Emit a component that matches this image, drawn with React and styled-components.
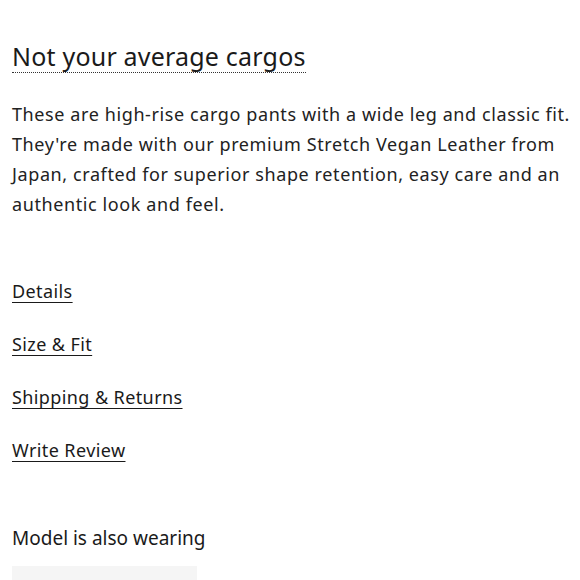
import React from "react"
import styled, { createGlobalStyle } from "styled-components"

const GlobalStyle = createGlobalStyle`
  body {
    margin: 0;
    background: #ffffff;
    font-family: "Noto Sans", "DejaVu Sans", sans-serif;
    color: #1a1a1a;
  }
`

const Page = styled.div`
  padding: 40px 4px 0 12px;
  height: 580px;
  overflow: hidden;
  box-sizing: border-box;
`

const Title = styled.h2`
  margin: 0;
  display: inline-block;
  font-size: 25px;
  font-weight: 400;
  line-height: 32px;
  letter-spacing: 0.2px;
  border-bottom: 1px dotted #333;
  padding-bottom: 0;
`

const Description = styled.p`
  margin: 26px 0 0;
  font-size: 18px;
  line-height: 30px;
  letter-spacing: 0.6px;
  color: #222;
`

const LinkList = styled.ul`
  list-style: none;
  margin: 59px 0 0;
  padding: 0;
  display: flex;
  flex-direction: column;
  gap: 27px;
`

const LinkItem = styled.li`
  a {
    font-size: 18px;
    line-height: 26px;
    letter-spacing: 0.4px;
    color: #1a1a1a;
    text-decoration: underline;
    text-underline-offset: 4px;
    text-decoration-thickness: 1px;
  }
`

const Subheading = styled.h3`
  margin: 61px 0 0;
  font-size: 19px;
  font-weight: 400;
  line-height: 28px;
`

const Placeholder = styled.div`
  margin-top: 14px;
  width: 185px;
  height: 40px;
  background: #f5f5f5;
`

const links = ["Details", "Size & Fit", "Shipping & Returns", "Write Review"]

export default function App() {
  return (
    <>
      <GlobalStyle />
      <Page>
        <Title>Not your average cargos</Title>
        <Description>
          These are high-rise cargo pants with a wide leg and classic fit.
          They're made with our premium Stretch Vegan Leather from Japan,
          crafted for superior shape retention, easy care and an authentic
          look and feel.
        </Description>
        <LinkList>
          {links.map((l) => (
            <LinkItem key={l}>
              <a href="#">{l}</a>
            </LinkItem>
          ))}
        </LinkList>
        <Subheading>Model is also wearing</Subheading>
        <Placeholder />
      </Page>
    </>
  )
}
